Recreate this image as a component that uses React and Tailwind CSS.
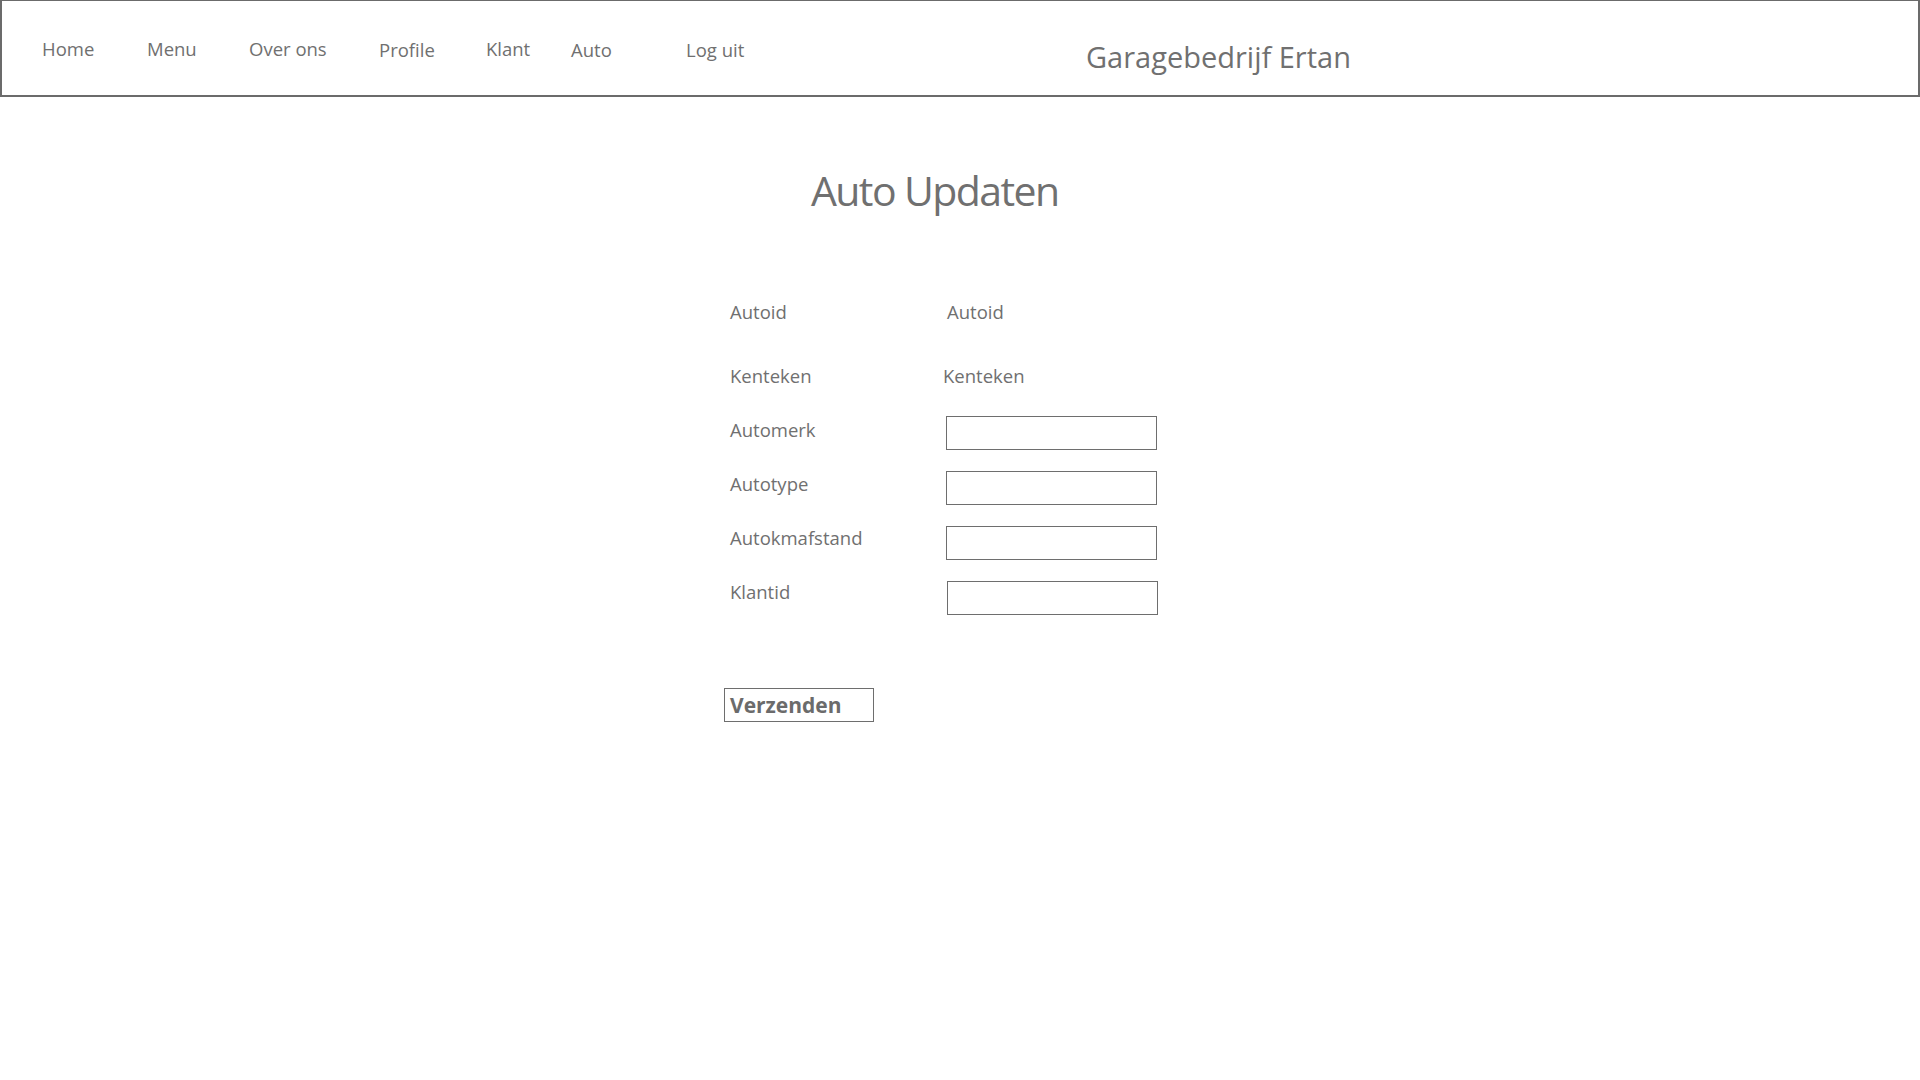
import React from "react";

const navItems = [
  { label: "Home", w: "w-[105px]", pt: "pt-[36px]" },
  { label: "Menu", w: "w-[102px]", pt: "pt-[36px]" },
  { label: "Over ons", w: "w-[130px]", pt: "pt-[36px]" },
  { label: "Profile", w: "w-[107px]", pt: "pt-[37px]" },
  { label: "Klant", w: "w-[85px]", pt: "pt-[36px]" },
  { label: "Auto", w: "w-[115px]", pt: "pt-[37px]" },
  { label: "Log uit", w: "w-[400px]", pt: "pt-[37px]" },
];

function InputRow({ label, mt, labelW, labelPt }) {
  return (
    <div className={`flex items-start ${mt}`}>
      <div className={`${labelW} ${labelPt} text-[18.5px] leading-[24px]`}>{label}</div>
      <input
        type="text"
        className="h-[34px] w-[211px] border border-[#6e6e6e] bg-white outline-none"
      />
    </div>
  );
}

export default function App() {
  return (
    <div className="min-h-screen w-[1920px] bg-white font-['Open_Sans',sans-serif] text-[#707070]">
      <header className="flex h-[97px] w-[1920px] items-start border-2 border-t border-[#6b6b6b] pl-[40px]">
        {navItems.map((n) => (
          <a key={n.label} className={`${n.w} ${n.pt} block text-[18.5px] leading-[24px]`}>
            {n.label}
          </a>
        ))}
        <div className="pt-[38px] text-[29px] leading-[36px]">Garagebedrijf Ertan</div>
      </header>

      <main className="pl-[811px]">
        <h1 className="mt-[69px] text-[41px] font-normal leading-[48px] tracking-[-1.6px]">Auto Updaten</h1>
      </main>

      <form className="flex flex-col pl-[730px]" onSubmit={(e) => e.preventDefault()}>
        <div className="mt-[86px] flex text-[18.5px] leading-[24px]">
          <div className="w-[217px]">Autoid</div>
          <div>Autoid</div>
        </div>
        <div className="mt-[40px] flex text-[18.5px] leading-[24px]">
          <div className="w-[213px]">Kenteken</div>
          <div>Kenteken</div>
        </div>
        <InputRow label="Automerk" mt="mt-[28px]" labelW="w-[216px]" labelPt="pt-[2px]" />
        <InputRow label="Autotype" mt="mt-[21px]" labelW="w-[216px]" labelPt="pt-px" />
        <InputRow label="Autokmafstand" mt="mt-[21px]" labelW="w-[216px]" labelPt="pt-0" />
        <InputRow label="Klantid" mt="mt-[21px]" labelW="w-[217px]" labelPt="-mt-px" />
        <div className="mt-[73px] -ml-[6px]">
          <button
            type="submit"
            className="flex h-[34px] w-[150px] items-start border border-[#6e6e6e] bg-white pl-[5px] text-left text-[21px] font-bold leading-[32px] text-[#6b6b6b]"
          >
            Verzenden
          </button>
        </div>
      </form>
    </div>
  );
}
